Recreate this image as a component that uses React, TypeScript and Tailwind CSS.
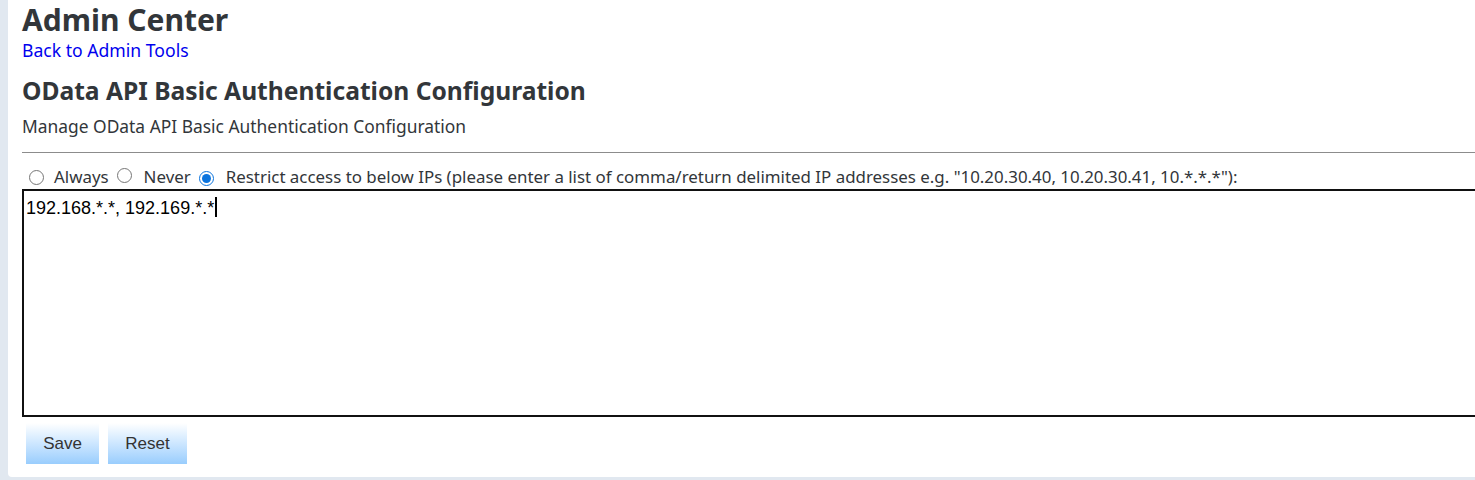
import React from "react";

function Radio({ checked }: { checked?: boolean }) {
  return checked ? (
    <span className="inline-flex h-[15px] w-[15px] items-center justify-center rounded-full border-[1.5px] border-[#0b74de] bg-white">
      <span className="h-[9px] w-[9px] rounded-full bg-[#0b74de]" />
    </span>
  ) : (
    <span className="inline-block h-[15px] w-[15px] rounded-full border border-[#767676] bg-white" />
  );
}

export default function App() {
  return (
    <div className="h-[480px] w-[1475px] overflow-hidden bg-[#e1e8f0] pl-[8px] pb-[3px]" style={{ fontFamily: '"Noto Sans", "Open Sans", sans-serif' }}>
      <div className="h-[477px] overflow-hidden rounded-bl-[4px] bg-white pl-[14px] pt-[2px] text-[#32363a]">
        <h1 className="text-[30px] font-bold leading-[36px]">Admin Center</h1>
        <a className="block text-[17.6px] leading-[24px] text-[#0000ee]">Back to Admin Tools</a>
        <h2 className="mt-[14px] text-[24.6px] font-bold leading-[30px]">OData API Basic Authentication Configuration</h2>
        <p className="mt-[8px] text-[17.4px] leading-[24px]">Manage OData API Basic Authentication Configuration</p>
        <div className="mt-[14px] h-px bg-[#8c8c8c]" />
        <div className="mt-[12px] flex items-center pl-[7px] text-[16.9px] leading-[24px]">
          <Radio />
          <span className="ml-[10px]">Always</span>
          <span className="ml-[8px]"><Radio /></span>
          <span className="ml-[12px]">Never</span>
          <span className="ml-[8px]"><Radio checked /></span>
          <span className="ml-[12px]">Restrict access to below IPs (please enter a list of comma/return delimited IP addresses e.g. "10.20.30.40, 10.20.30.41, 10.*.*.*"):</span>
        </div>
        <div className="h-[228px] w-[1500px] border-2 border-[#111] px-[2px] pt-[3px] text-[18px] leading-[22px] text-black" style={{ fontFamily: '"Liberation Sans", Arial, sans-serif' }}>
          192.168.*.*, 192.169.*.*<span className="ml-[1px] inline-block h-[20px] w-[1.5px] translate-y-[3px] bg-black" />
        </div>
        <div className="mt-[6px] flex gap-[9px] pl-[4px]">
          <button className="h-[41px] w-[73px] bg-gradient-to-b from-white to-[#99cdfd] text-[17px] text-[#333]" style={{ fontFamily: '"Liberation Sans", Arial, sans-serif' }}>Save</button>
          <button className="h-[41px] w-[79px] bg-gradient-to-b from-white to-[#99cdfd] text-[17px] text-[#333]" style={{ fontFamily: '"Liberation Sans", Arial, sans-serif' }}>Reset</button>
        </div>
      </div>
    </div>
  );
}
